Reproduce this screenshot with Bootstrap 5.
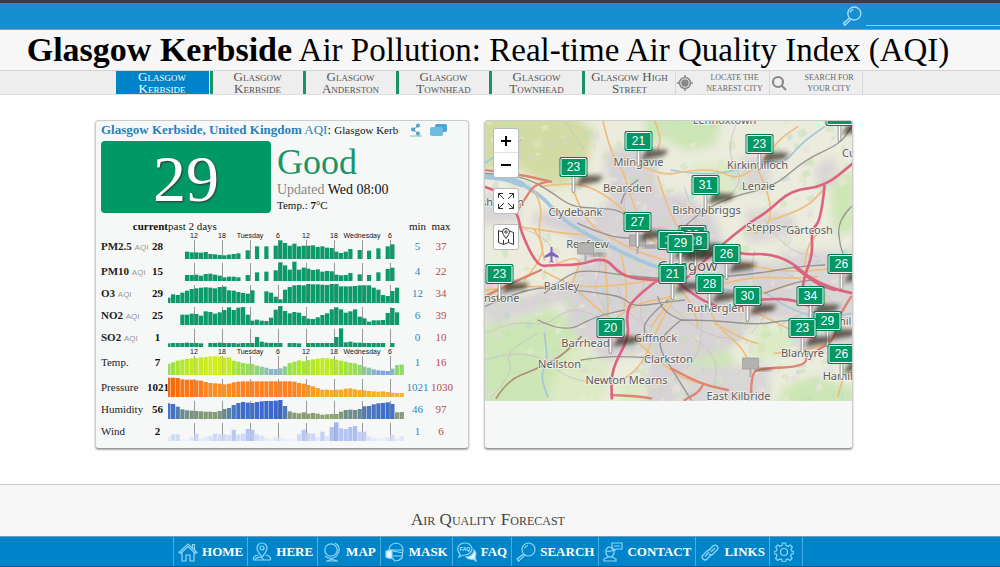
<!DOCTYPE html>
<html lang="en">
<head>
<meta charset="utf-8">
<meta name="viewport" content="width=device-width, initial-scale=1">
<title>Glasgow Kerbside Air Pollution: Real-time Air Quality Index (AQI)</title>
<link rel="stylesheet" href="https://cdn.jsdelivr.net/npm/bootstrap@5.3.0/dist/css/bootstrap.min.css">
<style>
  body { font-family: "Liberation Serif", serif; color: #111; background: #fff; font-size: 12px; line-height: 16px; overflow-x: hidden; }
  a { text-decoration: none; }
  .topbar { background: #158fcf; border-top: 3px solid #3c3c3c; border-bottom: 1px solid #8f9aa0; height: 30px; }
  .topbar input { width: 134px; height: 20px; background: transparent; border: 0; border-bottom: 1px solid #8fd3f4; color: #fff; }
  .headline { background: #f7f7f7; font-size: 33px; line-height: 40px; color: #000; white-space: nowrap; }
  .headline b { font-size: 34px; }
  .station-bar { background: #eee; border-top: 1px solid #d5d5d5; border-bottom: 1px solid #ddd; height: 25px; padding-right: 22px; }
  .station { width: 93px; border-left: 3px solid #1a9464; color: #555; font-variant: small-caps; font-size: 13px; line-height: 12px; white-space: pre-line; }
  .station.active { width: 94px; background: #0084c9; border-left: 0; border-right: 1px solid #fff; color: #fff; }
  .finder { width: 94px; border-left: 1px solid #d8d8d8; color: #666; font-size: 8px; line-height: 11px; white-space: pre-line; }
  .finder.last { border-right: 1px solid #d8d8d8; }
  .finder span { padding-left: 7px; }
  .panels { padding: 25px 52px 35px 0; }
  .panels-row { width: 758px; gap: 15px; }
  .panel { background: #f6f8f8; border: 1px solid #ccc; border-bottom-color: #999; border-radius: 4px; box-shadow: 0 1px 2px #aaa; min-height: 329px; flex: 1 1 0; min-width: 0; }
  .panel.station-panel { flex: 0 0 374px; padding: 0 5px; }
  .panel-head { font-size: 13px; line-height: 18px; white-space: nowrap; padding-right: 16px; }
  .panel-head a { color: #2880b8; }
  .panel-head .where { font-size: 11px; }
  .aqi-summary { gap: 6px; padding-top: 2px; }
  .aqi-box { width: 170px; height: 72px; background: #009966; color: #fff; border-radius: 4px; font-size: 66px; line-height: 76px; text-shadow: 1px 1px 2px #333; }
  .level { font-size: 36px; line-height: 42px; color: #1a9666; }
  .updated { font-size: 14px; line-height: 14px; }
  .updated span { color: #888; }
  .tempnow { font-size: 11px; line-height: 16px; }
  .readings { table-layout: fixed; width: 350px; border-collapse: collapse; margin-top: 7px; font-size: 11px; }
  .readings th, .readings td { padding: 0; vertical-align: middle; white-space: nowrap; line-height: 12px; }
  .readings thead th { font-weight: 400; }
  .readings tbody th { font-weight: 400; color: #222; }
  .readings tbody th.pollutant { font-weight: 700; }
  .readings small { font: 8px "Liberation Sans", sans-serif; color: #999; }
  .readings svg { display: block; }
  .now { font-weight: 700; }
  .lo { color: #2e86b8; } .hi { color: #b84a48; }
  .map-frame { position: relative; height: 280px; overflow: hidden; border-radius: 3px 3px 0 0; }
  .map-frame > svg { display: block; width: 100%; height: 100%; }
  .map-tools { position: absolute; left: 9px; top: 8px; }
  .map-tools button { width: 24px; height: 24px; padding: 0; background: #fff; border: 0; display: flex; align-items: center; justify-content: center; color: #000; }
  .map-tools .tool { border-radius: 2px; box-shadow: 0 0 0 1px #bbb; overflow: hidden; }
  .forecast { background: #f7f7f7; border-top: 1px solid #ccc; padding: 24px 24px 40px 0; font-size: 17px; line-height: 22px; font-variant: small-caps; color: #444; }
  .bottombar { background: #0084c9; border-top: 1px solid #6e9fb8; border-bottom: 1px solid #0a5c8c; height: 31px; padding-right: 24px; }
  .bottombar a { color: #fff; font-weight: 700; font-size: 13px; border-left: 1px solid #4cacdf; gap: 4px; padding: 0 4px; white-space: nowrap; }
  .bottombar a:last-child { border-right: 1px solid #4cacdf; padding-right: 8px; }
  .bottombar svg { width: 20px; height: 20px; fill: none; stroke: #8fd6f8; stroke-width: 1.2; }
</style>
</head>
<body>
<header>
  <div class="topbar d-flex justify-content-end align-items-center">
    <label for="q" class="d-flex me-1" aria-label="Search"><svg width="20" height="20" viewBox="0 0 20 20" fill="none" stroke="#a9e2fb" stroke-width="1.3"><circle cx="12.300" cy="7.500" r="6.500"/><path d="M8 6.500a4.500 4.500 0 0 1 3.500-3.200M7.500 12l-6 5.200 1.300 2.200 6.200-6.100"/></svg></label>
    <input id="q" type="text">
  </div>
  <h1 class="headline text-center fw-normal m-0 pe-4"><b>Glasgow Kerbside</b> Air Pollution: Real-time Air Quality Index (AQI)</h1>
  <nav class="station-bar d-flex justify-content-center text-center" aria-label="Stations">
    <a href="#" class="station active">Glasgow
Kerbside</a><a href="#" class="station">Glasgow
Kerbside</a><a href="#" class="station">Glasgow
Anderston</a><a href="#" class="station">Glasgow
Townhead</a><a href="#" class="station">Glasgow
Townhead</a><a href="#" class="station">Glasgow High
Street</a>
    <a href="#" class="finder d-flex align-items-center"><svg width="18" height="18" viewBox="0 0 18 18" fill="none" stroke="#888" stroke-width="1.500"><circle cx="9" cy="9" r="5.500"/><circle cx="9" cy="9" r="3" fill="#888"/><path d="M9 1v3M9 14v3M1 9h3M14 9h3"/></svg><span class="flex-grow-1">LOCATE THE
NEAREST CITY</span></a>
    <a href="#" class="finder last d-flex align-items-center"><svg width="20" height="18" viewBox="0 0 20 18" fill="none" stroke="#888" stroke-width="2.200"><circle cx="8" cy="8" r="5"/><path d="M12 12l4 4"/></svg><span class="flex-grow-1">SEARCH FOR
YOUR CITY</span></a>
  </nav>
</header>

<main class="panels d-flex justify-content-center">
  <div class="panels-row d-flex">
    <section class="panel station-panel">
      <div class="panel-head d-flex align-items-center">
        <div class="flex-grow-1"><a href="#"><b>Glasgow Kerbside, United Kingdom</b> AQI</a>: <span class="where">Glasgow Kerb</span></div>
        <a href="#" class="d-flex me-2" aria-label="Share"><svg width="12" height="14" viewBox="0 0 12 14"><path d="M0 13h12" stroke="#b9dced" stroke-width="2"/><path d="M8 3L3 6.500l5 4" fill="none" stroke="#4b9fcb"/><g fill="#72b9dd" stroke="#348bb9"><circle cx="8" cy="2.500" r="1.500"/><circle cx="3" cy="6.500" r="1.500"/><circle cx="8" cy="10.500" r="1.500"/></g></svg></a>
        <a href="#" class="d-flex" aria-label="Comments"><svg width="17" height="13" viewBox="0 0 17 13"><rect x="5" width="12" height="8" rx="2" fill="#4ca5d4"/><rect y="3" width="13" height="9" rx="2" fill="#6dbbe2"/></svg></a>
      </div>
      <div class="aqi-summary d-flex">
        <div class="aqi-box text-center">29</div>
        <div>
          <div class="level">Good</div>
          <div class="updated"><span>Updated</span> Wed 08:00</div>
          <div class="tempnow">Temp.: <b>7</b>°C</div>
        </div>
      </div>
      <table class="readings">
        <colgroup><col style="width:46px"><col style="width:21px"><col style="width:236px"><col style="width:27px"><col style="width:20px"></colgroup>
        <thead><tr><th colspan="2" class="text-end"><b>current</b></th><th>past 2 days</th><th class="text-center">min</th><th class="text-center">max</th></tr></thead>
        <tbody id="rows"></tbody>
      </table>
    </section>

    <section class="panel">
      <div class="map-frame">
        <svg viewBox="0 0 368 280" preserveAspectRatio="xMidYMid slice" role="img" aria-label="Map of Glasgow">
          <defs>
            <filter id="soft" x="-30%" y="-30%" width="160%" height="160%"><feGaussianBlur stdDeviation="2"/></filter>
            <filter id="wash" x="-10%" y="-10%" width="120%" height="120%"><feGaussianBlur stdDeviation="4"/></filter>
          </defs>
          <rect width="368" height="280" fill="#ebecdd"/>
          <g filter="url(#wash)">
            <path fill="#d3dba4" d="M-10-10h95l25 20-8 35-22 22-30-8-22-16-38 8z"/>
            <path fill="#cde6b6" d="M160-10h80l-10 35-30 5-20-12-20 5zM-10 205l40-5 35-13 20 10 15 35-10 60H-10zM195 200l32 5 20 28 8 25-35 6-40-20zM300 265l30-10 50 15v20h-90zM345 55l25-5v60l-20 5z"/>
            <path fill="#dcebc6" d="M205 45l50-5 10 30-40 10zM85 225l40 15-5 45H60zM270 205l40 5-5 25-40 5zM130 262l60-6 30 30h-80z"/>
            <path fill="#d7d2d5" d="M120 30l30-5 20 15 5 30 30 5 25 20 10 30 25 15 60 5 20 25-20 25-55 5-20 25-45 15-15 45h-30l5-55-45 10-35-35-5-25-75 25 5-20 75-25 15-25-15-20-40-15 10-10 50 5 20-15z"/>
            <path fill="#d9d6d6" d="M255 35h30v35h-30zM262 88l45 5 5 20-50 10zM295 130l80 0v100l-65 0zM205 245h80v45h-90zM330 45l20-10 5 25-20 10zM-5 150l35 10v35l-35 5zM-5 70l40 10v20l-40 5z"/>
          </g>
          <g id="patches"></g>
          <g id="roads" transform="translate(0 -1) scale(.33333)" fill="none" stroke-linecap="round" stroke-linejoin="round"></g>
          <g font-family="'Noto Sans', sans-serif" font-size="11" fill="#5c5a5a" stroke="#f4f3ee" stroke-width="1.500" paint-order="stroke" text-anchor="middle" id="places"></g>
          <path d="M68 126v5l6 4v2l-6-2v5l2 2-3-1-3 1 2-2v-5l-6 2v-2l6-4v-5z" fill="#8461c4"/>
          <g id="pins" font-family="'Liberation Sans', sans-serif" font-size="12" fill="#fff" text-anchor="middle"></g>
        </svg>
        <div class="map-tools d-flex flex-column gap-2">
          <div class="tool">
            <button type="button" aria-label="Zoom in" class="border-bottom"><svg width="12" height="12" stroke="#000" stroke-width="2"><path d="M1 6h10M6 1v10"/></svg></button>
            <button type="button" aria-label="Zoom out"><svg width="12" height="12" stroke="#000" stroke-width="2"><path d="M1 6h10"/></svg></button>
          </div>
          <div class="tool mt-1"><button type="button" aria-label="Full screen"><svg width="18" height="18" fill="none" stroke="#333"><path d="M7 7L1.500 1.500M1.500 6V1.500H6M11 7l5.500-5.500M12 1.500h4.500V6M7 11l-5.500 5.500M1.500 12v4.500H6M11 11l5.500 5.500M12 16.500h4.500V12"/></svg></button></div>
          <div class="tool mt-1"><button type="button" aria-label="Map layers"><svg width="18" height="18" fill="none" stroke="#333"><path d="M5.500 4L1.500 2.500v12l5 2 5-2 5 2v-12l-4-1.500M6.500 16V12M11.500 14v-3M9 10.500Q5.500 6 5.500 4a3.500 3.500 0 0 1 7 0q0 2-3.500 6.500z"/><circle cx="9" cy="4" r="1.200"/></svg></button></div>
        </div>
      </div>
    </section>
  </div>
</main>

<section class="forecast text-center">Air Quality Forecast</section>

<nav class="bottombar fixed-bottom d-flex justify-content-center" aria-label="Main">
  <a href="#" class="d-flex align-items-center"><svg viewBox="0 0 20 20"><path d="M1 10.500L10 2l9 8.500-1.500 1L10 4.500l-7.500 7zM4 10.500V19h4v-6h4v6h4v-8.500M14.500 6V2.500h2V8"/></svg>HOME</a>
  <a href="#" class="d-flex align-items-center"><svg viewBox="0 0 20 20"><path d="M10 15Q5 9 5 6a5 5 0 0 1 10 0q0 3-5 9z"/><circle cx="10" cy="6" r="2"/><path d="M6.500 13L4 13.500Q0 16 2 18h16q2-2-2-4.500l-2.500-.5M3 17q6-4 9 1"/></svg>HERE</a>
  <a href="#" class="d-flex align-items-center"><svg viewBox="0 0 20 20"><circle cx="9" cy="8" r="6.200"/><path d="M13 1q5 3 4 8t-6 7q-5 1-8-2M10 16v2M5 19q5-3 10 0z"/></svg>MAP</a>
  <a href="#" class="d-flex align-items-center"><svg viewBox="0 0 20 20"><path d="M4 8q0-6 7-7 7 1 7 7l-1 8q-3 3-7 3l-4-4M4 8h14M8 9l10 2M8 14h9"/><path d="M1 9l6-1v8q-3 1-6-1z" fill="#e9f8ff"/></svg>MASK</a>
  <a href="#" class="d-flex align-items-center"><svg viewBox="0 0 20 20"><path d="M2 15l1-3Q0 9 1 5q2-4 7-4t7 5q0 6-7 7-3 0-6 2z"/><path d="M9 15q8-1 8-7 3 3 1 7l1 4-3-2q-4 1-7-2z" fill="#e9f8ff"/><text x="8" y="9" text-anchor="middle" font-size="5" stroke="none" fill="#b9e8ff" font-family="Liberation Sans, sans-serif">FAQ</text></svg>FAQ</a>
  <a href="#" class="d-flex align-items-center"><svg viewBox="0 0 20 20"><circle cx="12.500" cy="7.500" r="6.500"/><path d="M8.500 6.500a4.500 4.500 0 0 1 3.500-3M7.500 12l-6.500 5 1.500 2.200L9 13"/></svg>SEARCH</a>
  <a href="#" class="d-flex align-items-center"><svg viewBox="0 0 20 20"><path d="M9 1h10v6h-6l-2 2V7H9zM11 4h6M3 8q1-3 4-3t4 3v3q-1 4-4 4t-4-4zM3 9q4 1 8-1M5 14v1l-4 2v2h12v-2l-4-2v-1"/></svg>CONTACT</a>
  <a href="#" class="d-flex align-items-center"><svg viewBox="0 0 20 20"><path d="M8 9l5-5q2-2 4 0t0 4l-4 4q-2 2-4 0M11 10l1-1 3-3M11 8q-2-1-4 1l-4 4q-2 2 0 4t4 0l4-4M9 10l-4 4.500"/></svg>LINKS</a>
  <a href="#" class="d-flex align-items-center" aria-label="Settings"><svg viewBox="0 0 20 20"><circle cx="10" cy="10" r="3.500"/><path d="M8.500 1h3l.5 2.500 2 1 2.300-1.400 2 2L17 7.500l.7 1.500 2 .5v2l-2.300.6-.8 1.900 1.400 2.400-2 2-2.400-1.400-1.600.8-.5 2h-3l-.6-2-2-.9-2.300 1.500-2-2L3 14l-.8-1.900L0 11.500v-2L2.400 9 3 7 1.700 5l2-2L6 4.300l2-.8z"/></svg></a>
</nav>

<script src="https://cdn.jsdelivr.net/npm/bootstrap@5.3.0/dist/js/bootstrap.bundle.min.js"></script>
<script>
// Hourly readings over the last 51 hours, 0 = no reading, full scale = 60
const rows = [
 {n:'PM2.5',p:1,now:28,lo:5,hi:37,d:[0,0,0,0,22,20,20,19,21,15,14,12,11,13,15,17,0,26,0,38,0,38,0,40,56,48,40,46,38,40,40,41,36,38,34,33,22,18,22,30,0,27,0,25,0,32,0,38,44]},
 {n:'PM10',p:1,now:15,lo:4,hi:22,d:[0,0,0,0,18,18,19,16,21,22,19,16,11,13,13,11,0,18,0,26,0,28,0,32,56,47,34,58,34,40,37,33,35,28,30,29,19,17,18,24,0,20,0,18,0,26,0,36,40]},
 {n:'O3',p:1,now:29,lo:12,hi:34,d:[16,26,24,31,37,42,44,46,47,46,44,48,49,38,37,33,30,28,38,0,0,35,31,19,11,40,48,53,54,53,57,56,56,55,54,57,57,50,50,50,51,53,53,53,46,40,24,21,36,46]},
 {n:'NO2',p:1,now:25,lo:6,hi:39,d:[0,0,0,31,31,34,33,28,41,39,34,38,45,53,45,52,54,31,13,16,13,12,22,46,57,42,35,39,37,27,19,18,23,30,35,47,53,47,37,41,47,25,20,10,14,14,15,36,51,38]},
 {n:'SO2',p:1,now:1,lo:0,hi:10,d:[11,12,12,12,13,12,12,11,0,12,12,13,12,12,12,11,12,12,12,30,16,13,12,12,12,0,12,12,11,0,12,12,12,12,12,12,30,56,14,16,13,13,12,12,12,12,12,0,12]},
 {n:'Temp.',now:7,lo:1,hi:16,c:[[12,128,160,225],[20,140,188,190],[30,146,216,110],[40,160,228,55],[56,210,238,25]],d:[34,38,43,46,48,50,51,53,54,56,56,56,53,53,43,40,36,34,33,28,25,22,18,18,20,26,36,40,44,41,45,47,49,51,50,49,46,43,40,37,35,30,25,22,17,14,13,12,19,30,31]},
 {n:'Pressure',now:1021,lo:1021,hi:1030,c:[[12,249,180,42],[30,249,160,40],[46,252,132,36],[58,248,108,12]],d:[58,58,57,53,52,52,50,49,45,42,41,40,38,40,44,46,47,47,47,47,47,47,47,47,47,47,47,46,42,40,36,32,27,22,22,21,22,22,25,26,23,21,20,18,17,16,17,15,13,12,12]},
 {n:'Humidity',now:56,lo:46,hi:97,c:[[13,146,164,112],[22,132,154,120],[34,88,128,168],[48,64,112,204],[57,56,100,204]],d:[47,45,37,29,26,25,24,23,22,22,21,24,30,33,42,48,51,49,48,51,53,54,54,55,57,39,23,19,17,20,16,18,16,13,14,15,15,22,27,28,27,30,38,39,44,47,48,50,45,20,21]},
 {n:'Wind',now:2,lo:1,hi:6,c:[[6,236,240,252],[20,208,219,248],[34,184,200,242],[56,160,182,238]],d:[12,20,20,6,6,12,22,8,12,16,22,20,20,18,34,20,22,36,34,20,16,10,8,12,10,8,6,6,20,34,24,22,12,28,14,42,56,38,36,42,45,28,28,14,10,8,8,12,18,8,14]}
];
const hours = ['12','18','Tuesday','6','12','18','Wednesday','6'];
const step = 28 / 6;

function shade(stops, v) {
  if (!stops) return '#0c9a68';
  let a = stops[0], b = stops[stops.length - 1];
  for (let i = 1; i < stops.length; i++) if (v <= stops[i][0]) { a = stops[i-1]; b = stops[i]; break; }
  const t = Math.max(0, Math.min(1, (v - a[0]) / (b[0] - a[0])));
  return 'rgb(' + [1,2,3].map(i => Math.round(a[i] + (b[i] - a[i]) * t)).join() + ')';
}
document.getElementById('rows').innerHTML = rows.map((r, n) => {
  const head = n === 0 || n === 5, h = head ? 28 : 22, base = h - 1;
  let s = '';
  hours.forEach((t, i) => {
    const x = (i + 1) * 28 - 2;
    s += `<path d="M${x}.5 ${head ? 8 : 3}V${base}" stroke="#999"/>`;
  });
  r.d.forEach((v, k) => { if (v) s += `<rect x="${k * step - 1.7}" y="${base - v / 3}" width="4.2" height="${v / 3}" fill="${shade(r.c, v)}"/>`; });
  if (head) hours.forEach((t, i) => { s += `<text x="${(i + 1) * 28 - 2}" y="6" text-anchor="middle" font-size="7" font-family="Liberation Sans, sans-serif" fill="#111" stroke="#f6f8f8" stroke-width="2" paint-order="stroke">${t}</text>`; });
  return `<tr><th scope="row" class="${r.p ? 'pollutant' : ''}">${r.n}${r.p ? ' <small>AQI</small>' : ''}</th><td class="now text-center">${r.now}</td><td><svg width="236" height="${h}">${s}</svg></td><td class="lo text-center">${r.lo}</td><td class="hi text-center">${r.hi}</td></tr>`;
}).join('');

// Fields, woods and lochs scattered over the base map
let seed = 7;
const rnd = () => (seed = (seed * 16807) % 2147483647) / 2147483647;
const tints = ['#c4e2ab','#d9e8c4','#eeeeda','#bfdfb4','#dcd6d8','#b5d8d3','#d0dfa8','#f0ecd8','#e2dce0'];
let patch = '';
for (let i = 0; i < 480; i++) {
  const x = rnd() * 368, y = rnd() * 280, w = 2 + rnd() * 7, h = 2 + rnd() * 6;
  patch += `<path opacity=".45" fill="${tints[Math.floor(rnd() * tints.length)]}" d="M${x} ${y}l${w} ${-h / 2}l${w / 3} ${h}l${-w} ${h / 2}z"/>`;
}
document.getElementById('patches').innerHTML = patch;

// Each layer: colour, line width, then lines as x,y pairs at three times the map's scale
const layers = [
 ['#c9c1c6', 2.5, '0 640,90 600,180 620,260 560,340 590', '100 320,190 350,220 430', '440 190,400 260,470 310,440 390', '570 240,660 300,640 370', '330 500,370 600,450 670,540 650', '650 570,660 690,570 780', '900 460,1000 500,1060 560', '760 0,720 90,780 170,720 250', '240 0,300 90', '0 720,130 680,250 780,370 790', '810 390,790 480,860 570,800 640', '480 480,450 600,540 690', '300 330,360 390,330 510', '620 650,700 700,690 800', '400 500,420 580,500 620', '560 560,640 640,760 660', '600 200,640 330', '840 300,900 390,1000 410', '20 830,90 760,60 700,160 640', '880 620,960 560,1100 600'],
 ['#a5c7dc', 20, '0 168,60 172,110 192'],
 ['#a5c7dc', 11, '100 185,170 225,220 285,290 335,390 385,460 420,530 445'],
 ['#a5c7dc', 5, '530 450,600 500,670 480,740 520,820 500,900 560,1010 600,1100 580', '190 830,165 770,190 730,180 640', '560 150,650 165,740 155,850 120,900 130,950 70,1020 20', '0 130,60 90,110 60'],
 ['#efbd7c', 5, '170 200,230 190,310 195,400 250,470 330,540 390', '100 320,170 330,240 340,300 345', '150 215,175 260,160 330,180 420', '270 220,300 300,370 350,470 400,540 420', '355 0,375 90,420 160,440 240,480 330', '420 110,520 170,620 150,700 150,760 180,830 130', '520 170,560 300,610 350', '510 0,530 50,520 90', '820 150,855 220,860 310,810 340', '860 300,960 270,1020 205', '830 130,880 60,940 20', '180 455,260 500,360 500,520 480', '265 500,320 550,370 590', '360 410,370 520,370 590', '120 480,190 400,150 330', '0 470,60 440', '500 620,560 540,570 490', '560 550,510 640,470 740,400 790', '430 640,560 760,640 790', '680 580,700 620,770 680,790 720', '690 610,780 660,820 670', '800 570,880 610,960 650', '770 430,850 450,960 455,1100 440', '720 490,800 470,920 475,1000 470', '830 520,930 490', '640 620,630 560,580 500', '0 510,90 500,180 500', '1080 760,1060 830', '200 440,300 390,260 500', '410 400,430 500,420 560', '1000 340,970 370,960 440', '870 700,1000 690,1060 640', '350 640,420 560,560 530'],
 ['#969392', 4, '0 160,110 165,200 215,260 260,340 265,410 270,480 330', '180 520,250 460,320 450,440 470,550 475', '0 560,90 520,180 500,270 510,350 520,410 530,450 560,520 550,600 540', '280 310,370 350,450 355', '590 600,680 600,820 615,900 600,1000 600', '590 600,540 640,520 680,570 760,620 840', '520 530,530 570,590 600', '550 540,480 600,480 640', '600 320,640 280,740 230,870 200,960 120,1070 70,1100 20', '1100 260,1060 300,1065 380,1100 460', '720 470,830 460,930 440,1020 435', '890 320,940 320', '840 520,920 490,980 480', '290 720,360 710,430 710,540 715', '160 600,240 640,330 590,420 570', '410 250,420 210,460 180'],
 ['#b18a75', 5, '35 835,70 780,150 750,230 710,290 650'],
 ['#e08371', 7, '0 150,90 160,200 185', '100 270,125 230,150 195,190 185', '800 820,800 760,830 745,960 740,970 700', '560 745,640 790,730 810', '380 825,450 828,500 835', '600 840,640 820,655 795', '1100 530,1060 590,1050 660,1000 690', '0 530,80 490,170 450'],
 ['#dc6480', 8, '0 200,50 215,100 280,110 340,160 440,200 435,280 435,360 412,400 455,440 475,520 480,590 490', '520 480,440 540,425 590,435 650,380 750,382 835', '590 490,650 430,735 355,800 305,850 275,920 210,1020 200,1105 130', '1020 200,1010 300,980 330,985 400,960 470,955 500', '690 380,770 405,850 400,920 425,970 470,1040 505,1105 520', '570 480,640 535,700 560', '760 545,850 535,930 540,980 560', '930 440,990 490,1050 510']
];
// Rounds a chain of points by running curves through the midpoints
function curve(line) {
  const p = line.split(',').map(q => q.split(' ').map(Number));
  let d = `M${p[0]}`;
  for (let i = 1; i < p.length - 1; i++) d += `Q${p[i]} ${(p[i][0] + p[i+1][0]) / 2},${(p[i][1] + p[i+1][1]) / 2}`;
  return d + `L${p[p.length - 1]}`;
}
document.getElementById('roads').innerHTML = layers.map(([c, w, ...ls]) => `<path stroke="${c}" stroke-width="${w}" d="${ls.map(curve).join('')}"/>`).join('');

const places = [['Milngavie',154,45],['Bearsden',143,71],['Clydebank',91,95],['Renfrew',103,127],['Paisley',77,169],['Johnstone',9,181],['Barrhead',101,226],['Neilston',75,247],['Newton Mearns',142,263],['Giffnock',171,221],['Clarkston',184,242],['East Kilbride',254,279],['Blantyre',318,236],['Hamilton',362,259],['Rutherglen',231,191],['Lennoxtown',240,3],['Kirkintilloch',273,48],['Lenzie',274,69],['Bishopbriggs',222,93],['Stepps',279,110],['Gartcosh',325,113],['Bishopton',13,85],['Cumbernauld',393,36],['Bellshill',350,204]];
document.getElementById('places').innerHTML = places.map(p => `<text x="${p[1]}" y="${p[2]}">${p[0]}</text>`).join('') + '<text x="203" y="150" font-size="15">Glasgow</text>';

// Stations on the map; those with no value are out of service
const pins = [[28,355,-5],[21,154,20],[23,275,23],[23,89,46],[31,221,64],['',101,127],['',153,119],[27,153,101],[29,208,114],[28,211,120],[22,187,119],[29,196,122],[26,242,133],[26,357,143],[23,15,153],[21,188,153],[28,225,163],[30,263,175],[34,326,175],[29,343,200],[23,318,207],[20,126,207],[26,357,233],['',266,242]];
document.getElementById('pins').innerHTML = pins.map(([v, x, y]) => {
  if (v === '') return `<path d="M${x+2} ${y+8}h16l5-3h-14z" fill="#3b3126" opacity=".6" filter="url(#soft)"/><path d="M${x} ${y+5}v9" stroke="#aaa" stroke-width="2"/><rect x="${x-8}" y="${y-5}" width="16" height="11" fill="#b5b3b1" stroke="#999" stroke-width=".7"/>`;
  return `<path d="M${x+2} ${y+19}L${x+8} ${y+8}l22 1-5 6-17 3z" fill="#30281f" opacity=".7" filter="url(#soft)"/><path d="M${x} ${y+9}v15" stroke="#777" stroke-width="3.500" stroke-linecap="round"/><path d="M${x} ${y+9}v15" stroke="#fff" stroke-width="2" stroke-linecap="round"/><rect x="${x-14}" y="${y-10}" width="28" height="20" rx="2" fill="#007a50"/><rect x="${x-12.5}" y="${y-8.500}" width="25" height="17" rx="1" fill="#009966" stroke="#fff"/><text x="${x}" y="${y+4}">${v}</text>`;
}).join('');
</script>
</body>
</html>
